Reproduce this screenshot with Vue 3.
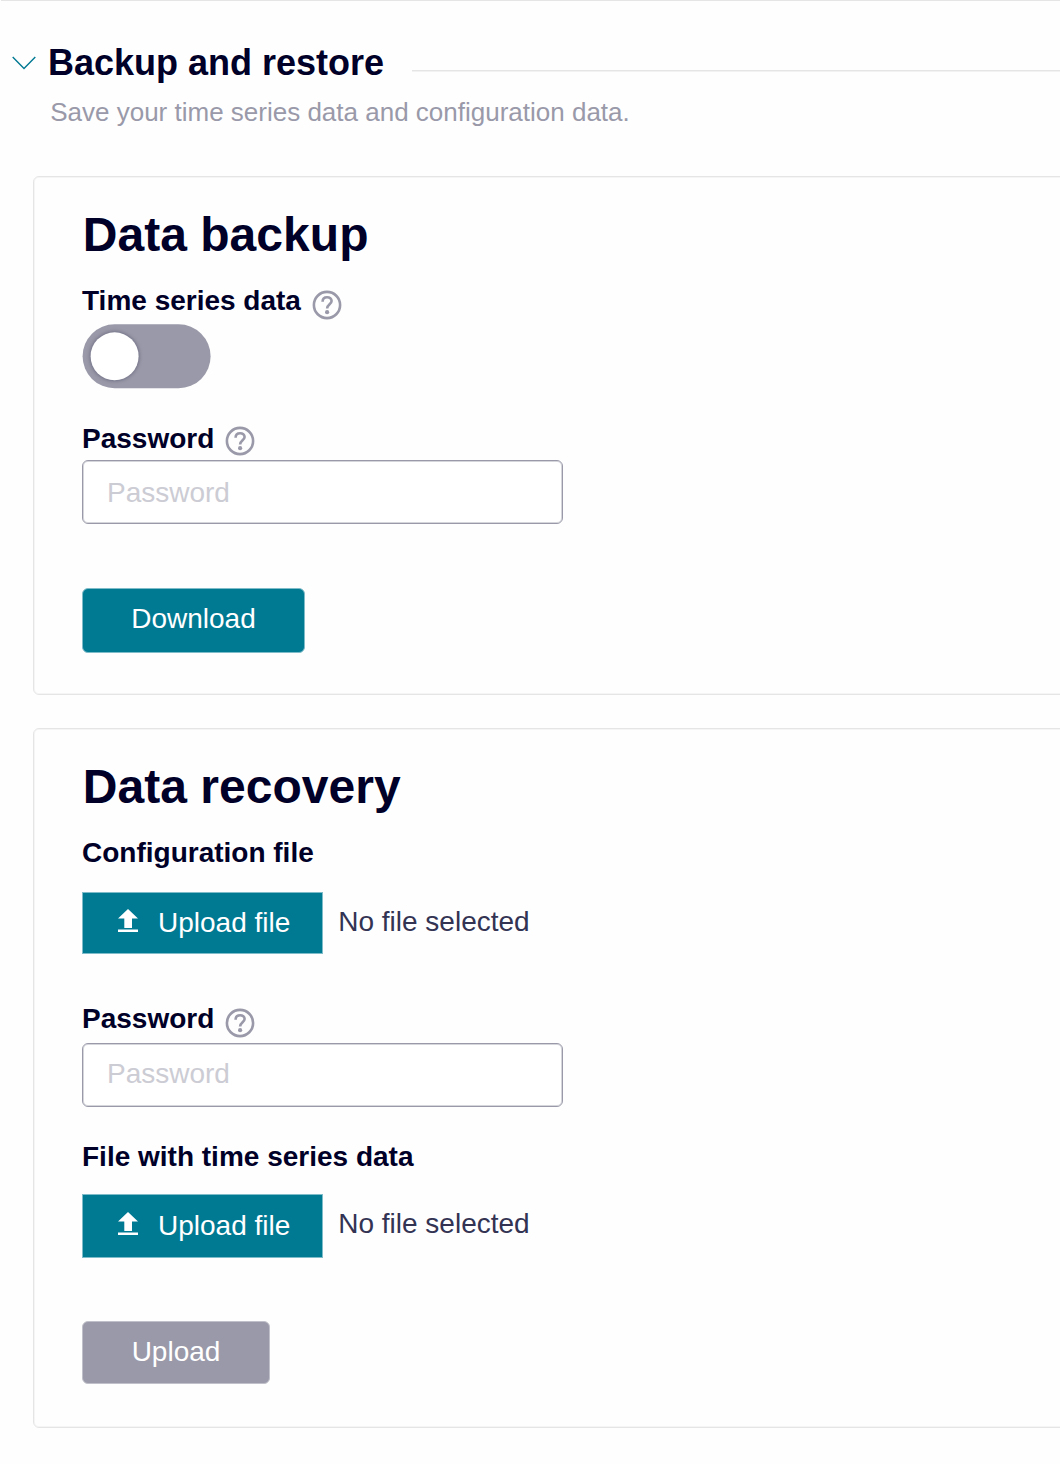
<script setup>
import { h, ref } from 'vue'

const HelpIcon = () =>
  h('svg', { class: 'help', viewBox: '0 0 30 30', width: 30, height: 30, 'aria-label': 'Help' }, [
    h('circle', { cx: 15, cy: 15, r: 13.1, fill: 'none', stroke: '#9999a9', 'stroke-width': 2.6 }),
    h('path', {
      d: 'M10.6 11.8C10.6 8.8 12.5 7.2 15.1 7.2C17.7 7.2 19.6 8.8 19.6 11.1C19.6 14.2 15.1 14.6 15.1 18.6',
      fill: 'none', stroke: '#9999a9', 'stroke-width': 2.6
    }),
    h('circle', { cx: 15.1, cy: 22.2, r: 2.1, fill: '#9999a9' })
  ])

const UploadIcon = () =>
  h('svg', { class: 'arrow', viewBox: '0 0 20 23', width: 20, height: 23 }, [
    h('path', { d: 'M10 0L20 9.6H14V19H6.3V9.6H0ZM0 20.4H20V23H0Z', fill: '#fff' })
  ])

const timeSeries = ref(false)
const backupPassword = ref('')
const recoveryPassword = ref('')
</script>

<template>
  <main class="page">
    <header class="section-head">
      <svg class="chevron" viewBox="0 0 24 14" width="24" height="14">
        <path d="M.7 1L12 12.4L23.3 1" fill="none" stroke="#007993" stroke-width="1.4" />
      </svg>
      <h1>Backup and restore</h1>
      <span class="rule"></span>
    </header>
    <p class="intro">Save your time series data and configuration data.</p>

    <section class="card backup">
      <h2>Data backup</h2>
      <div class="label series">Time series data <HelpIcon /></div>
      <button class="toggle" role="switch" :aria-checked="timeSeries" @click="timeSeries = !timeSeries">
        <span class="knob"></span>
      </button>
      <div class="label pw">Password <HelpIcon /></div>
      <input v-model="backupPassword" type="password" placeholder="Password" />
      <button class="btn download">Download</button>
    </section>

    <section class="card recovery">
      <h2>Data recovery</h2>
      <div class="label">Configuration file</div>
      <div class="file-row config">
        <button class="file-btn"><UploadIcon />Upload file</button>
        <span>No file selected</span>
      </div>
      <div class="label pw">Password <HelpIcon /></div>
      <input v-model="recoveryPassword" type="password" placeholder="Password" />
      <div class="label series-file">File with time series data</div>
      <div class="file-row series-row">
        <button class="file-btn"><UploadIcon />Upload file</button>
        <span>No file selected</span>
      </div>
      <button class="btn upload" disabled>Upload</button>
    </section>
  </main>
</template>

<style>
body {
  background: #fefefe;
  overflow: hidden;
}
</style>

<style scoped>
.page {
  box-sizing: border-box;
  height: 1464px;
  overflow: hidden;
  background: linear-gradient(#e5e5e5, #e5e5e5) 1px 0 / 100% 1px no-repeat;
  font: 28px/32px "Liberation Sans", Arial, sans-serif;
  color: #000028;
}
h1, h2, p {
  margin: 0;
}
button, input {
  box-sizing: border-box;
  font: inherit;
  margin: 0;
}
.section-head {
  display: flex;
  align-items: flex-start;
  padding: 42px 0 0 12px;
  height: 42px;
}
.chevron {
  margin-top: 14px;
  margin-right: 12px;
}
h1 {
  font-size: 36px;
  line-height: 42px;
  white-space: nowrap;
}
.rule {
  flex: 1;
  height: 1px;
  margin: 28px 0 0 28px;
  background: #e5e5e5;
  border-bottom: 1px solid #f2f2f2;
}
.intro {
  margin: 13px 0 0 50.2px;
  font-size: 26px;
  line-height: 30px;
  color: #9999a9;
}
.card {
  display: flex;
  flex-direction: column;
  align-items: flex-start;
  box-sizing: border-box;
  margin-left: 33px;
  margin-right: -10px;
  padding-left: 48px;
  border: 1px solid #e5e5e5;
  border-radius: 6px;
  box-shadow: inset 0 0 0 1px #f5f5f5;
}
.backup {
  margin-top: 49px;
  height: 519px;
}
.recovery {
  margin-top: 33px;
  height: 700px;
}
h2 {
  margin-top: 30px;
  padding-left: 0.7px;
  font-size: 48px;
  line-height: 56px;
  letter-spacing: 0.04px;
}
.label {
  display: flex;
  align-items: flex-start;
  height: 32px;
  margin-top: 22px;
  font-weight: bold;
}
.label :deep(.help) {
  flex: none;
  margin-left: 11px;
}
.series :deep(.help) {
  margin-top: 5px;
}
.backup .pw :deep(.help) {
  margin-top: 3px;
}
.recovery .pw :deep(.help) {
  margin-top: 5px;
}
.toggle {
  display: flex;
  width: 128px;
  height: 64px;
  margin-top: 7px;
  padding: 8px;
  border: 0;
  border-radius: 32px;
  background: #9999a9;
  transform: translate(0.6px, 0.3px);
}
.knob {
  width: 48px;
  height: 48px;
  border-radius: 50%;
  background: #fff;
  box-shadow: 0 0 4px rgba(0, 0, 40, 0.4);
}
.backup .pw {
  margin-top: 35px;
}
input {
  width: 481px;
  height: 64px;
  margin-top: 5px;
  padding: 2px 24px 0;
  border: 1px solid #9999a9;
  border-radius: 6px;
  box-shadow: inset 0 0 0 1px #d5d5dc;
  background: #fff;
  outline: none;
}
.recovery input {
  margin-top: 8px;
  padding-top: 0;
  padding-bottom: 3px;
}
input::placeholder {
  color: #ccccd4;
  opacity: 1;
}
.btn {
  height: 64px;
  padding: 0 48px 3px;
  border: 1px solid #7fbcc9;
  border-radius: 6px;
  background: #007993;
  color: #fff;
}
.download {
  width: 223px;
  height: 65px;
  margin-top: 64px;
  padding-bottom: 4px;
}
.file-row {
  display: flex;
  color: #333353;
}
.file-row > span {
  margin: 14px 0 0 15.2px;
}
.file-btn {
  display: flex;
  align-items: center;
  width: 241px;
  height: 62px;
  padding: 0 0 1px 35px;
  border: 1px solid #7fbcc9;
  background: #007993;
  color: #fff;
}
.arrow {
  margin-right: 20px;
  margin-bottom: 4px;
}
.config {
  margin-top: 23px;
}
.recovery .pw {
  margin-top: 49px;
}
.series-file {
  margin-top: 34px;
}
.series-row {
  margin-top: 21px;
}
.series-row .file-btn {
  height: 64px;
}
.upload {
  width: 188px;
  height: 63px;
  margin-top: 63px;
  padding-bottom: 1px;
  border-color: #c0c0ca;
  background: #9999a9;
}
</style>
